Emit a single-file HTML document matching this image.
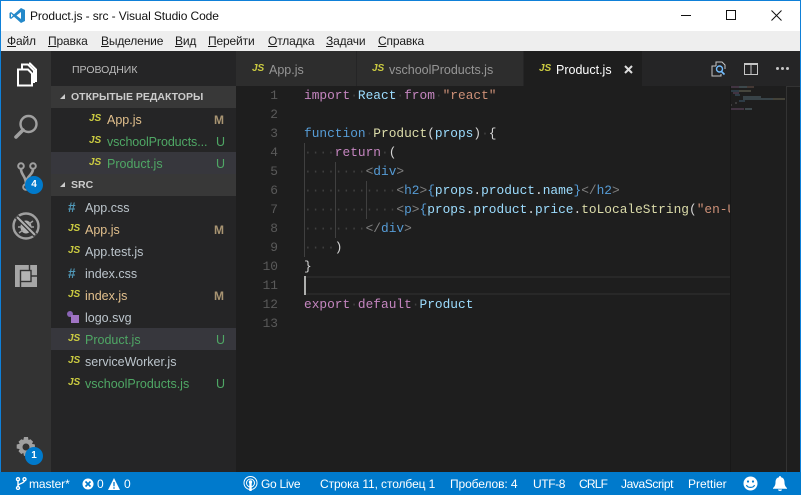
<!DOCTYPE html>
<html><head><meta charset="utf-8">
<style>
html,body{margin:0;padding:0;background:#1e1e1e;}
#r{position:relative;width:801px;height:495px;overflow:hidden;background:#1e1e1e;font-family:"Liberation Sans",sans-serif;}
.a{position:absolute;}
.t{position:absolute;white-space:pre;line-height:16px;}
.m{font-size:12px;color:#1a1a1a;top:33px;letter-spacing:-.15px;}
.m u{text-decoration:underline;}
.f{font-size:12.5px;color:#cccccc;}
.g{color:#73c991;}.o{color:#e2c08d;}
.b{font-size:12px;font-weight:bold;}
.js{position:absolute;font-size:10px;font-weight:bold;font-style:italic;color:#cbcb41;font-family:"Liberation Sans",sans-serif;line-height:12px;}
.h{position:absolute;font-size:13.5px;font-weight:bold;color:#519aba;line-height:14px;}
.c{position:absolute;left:304px;font-family:"Liberation Mono",monospace;font-size:12.83px;line-height:19px;white-space:pre;color:#d4d4d4;}
.n{position:absolute;width:30px;left:248px;text-align:right;font-family:"Liberation Mono",monospace;font-size:12.83px;line-height:19px;color:#5a5a5a;}
.w{color:#404040;}
.k{color:#c586c0;}.v{color:#569cd6;}.i{color:#9cdcfe;}.s{color:#ce9178;}.y{color:#dcdcaa;}.l{color:#808080;}
.st{position:absolute;top:476px;font-size:12px;line-height:16px;color:#fff;white-space:pre;}
.ig{position:absolute;width:1px;background:#404040;}
.bd{position:absolute;width:18px;height:18px;border-radius:50%;background:#007acc;color:#fff;font-size:10px;font-weight:bold;text-align:center;line-height:18px;}
</style></head><body>
<div id="r">
<!-- title -->
<div class="a" style="left:0;top:0;width:801px;height:31px;background:#fff;"></div>
<div class="a" style="left:0;top:0;width:801px;height:1px;background:#0f80d8;"></div>
<svg class="a" style="left:9px;top:7px" width="17" height="17" viewBox="0 0 17 17"><path d="M12 1l4 2v11l-4 2-7-6.2L2 12 .5 11V6L2 5l3 2.2z" fill="#2489ca"/><path d="M12 5L7.500 8.500 12 12z" fill="#fff"/><path d="M2 6.500v4L4 8.500z" fill="#fff"/></svg>
<div class="t" style="left:30px;top:8px;font-size:12px;color:#111;letter-spacing:-.1px">Product.js - src - Visual Studio Code</div>
<div class="a" style="left:681px;top:15px;width:10px;height:1px;background:#111;"></div>
<div class="a" style="left:726px;top:10px;width:8px;height:8px;border:1px solid #111;"></div>
<svg class="a" style="left:771px;top:10px" width="11" height="11"><path d="M.5.5l10 10M10.500.5l-10 10" stroke="#111" stroke-width="1"/></svg>
<!-- menu -->
<div class="a" style="left:0;top:31px;width:801px;height:20px;background:#eeeeee;"></div>
<div class="t m" style="left:7px"><u>Ф</u>айл</div>
<div class="t m" style="left:48px"><u>П</u>равка</div>
<div class="t m" style="left:101px"><u>В</u>ыделение</div>
<div class="t m" style="left:175px"><u>В</u>ид</div>
<div class="t m" style="left:208px"><u>П</u>ерейти</div>
<div class="t m" style="left:268px"><u>О</u>тладка</div>
<div class="t m" style="left:326px"><u>З</u>адачи</div>
<div class="t m" style="left:378px"><u>С</u>правка</div>
<!-- activity -->
<div class="a" style="left:1px;top:51px;width:50px;height:421px;background:#333333;"></div>
<div class="a" style="left:0;top:0;width:1px;height:495px;background:#0f80d8;"></div>
<div class="a" style="left:800px;top:0;width:1px;height:495px;background:#0f80d8;"></div>
<svg class="a" style="left:14px;top:62px" width="26" height="26" viewBox="0 0 26 26" fill="none" stroke="#fff" stroke-width="2"><path d="M4 7.500V23.500H18V11.500l-4-4z"/><path d="M8 7V2.500h6l6 6V20h-2"/><path d="M15 1.500h1l6 6V20"/></svg>
<svg class="a" style="left:13px;top:114px" width="26" height="26" viewBox="0 0 26 26" fill="none" stroke="#a0a0a0"><circle cx="15.500" cy="10" r="8" stroke-width="2.400"/><path d="M10 16L3 23" stroke-width="3.600" stroke-linecap="round"/></svg>
<svg class="a" style="left:15px;top:162px" width="24" height="30" viewBox="0 0 24 30" fill="none" stroke="#a0a0a0" stroke-width="2"><circle cx="6" cy="4" r="2.800"/><circle cx="18" cy="4" r="2.800"/><circle cx="11" cy="25" r="2.800"/><path d="M6 7c0 6 5 7 5 15M18 7c0 6-7 7-7 15" stroke-width="2.600"/></svg>
<div class="bd" style="left:25px;top:176px">4</div>
<svg class="a" style="left:12px;top:212px" width="28" height="28" viewBox="0 0 28 28" fill="none" stroke="#a0a0a0"><circle cx="14" cy="14" r="12.500" stroke-width="2.400"/><ellipse cx="14" cy="15" rx="5.500" ry="6.500" fill="#b0b0b0" stroke="none"/><path d="M7 9l4 3M21 9l-4 3M6 15h4M22 15h-4M7 21l4-3M21 21l-4-3" stroke-width="1.500"/><path d="M4.500 4.500l19 19" stroke="#333" stroke-width="4.500"/><path d="M5 5l18 18" stroke="#b0b0b0" stroke-width="2"/></svg>
<svg class="a" style="left:15px;top:265px" width="22" height="22" viewBox="0 0 22 22"><rect width="22" height="22" fill="#a6a6a6"/><path d="M14.500 0v5.500M15.500 11H22M5.500 16.500V22" stroke="#333" stroke-width="1.400" fill="none"/><rect x="5.500" y="5.500" width="10.500" height="11" fill="#b4b4b4" stroke="#333" stroke-width="1.400"/></svg>
<svg class="a" style="left:16px;top:437px" width="20" height="20" viewBox="0 0 20 20"><path fill="#a0a0a0" fill-rule="evenodd" d="M8 0h4l.5 3 2-.8 2.600 2.600-1.200 2 3 .7v4l-3 .6 1.200 2.200-2.800 2.800-2-1.200-.8 3H8l-.7-3-2 1.200-2.800-2.800 1.200-2.200-3-.6V7.500l3-.7-1.200-2 2.800-2.600 2 .8zM10 6.500a3.500 3.500 0 1 0 0 7 3.500 3.500 0 0 0 0-7z"/></svg>
<div class="bd" style="left:25px;top:447px">1</div>
<!-- sidebar -->
<div class="a" style="left:51px;top:51px;width:185px;height:421px;background:#252526;"></div>
<div class="t" style="left:72px;top:62px;font-size:10.5px;color:#bbbbbb">ПРОВОДНИК</div>
<div class="a" style="left:51px;top:86px;width:185px;height:22px;background:#383838;"></div>
<div class="t b" style="left:71px;top:89px;font-size:10.5px;color:#cccccc;">ОТКРЫТЫЕ РЕДАКТОРЫ</div>
<svg class="a" style="left:59px;top:93px" width="7" height="7"><path d="M6 1v5H1z" fill="#ccc"/></svg>
<div class="a" style="left:51px;top:152px;width:185px;height:22px;background:#37373d;"></div>
<div class="js" style="left:89px;top:113px">JS</div><div class="t f o" style="left:107px;top:112px">App.js</div><div class="t b" style="left:214px;top:112px;color:#a89472">M</div>
<div class="js" style="left:89px;top:135px">JS</div><div class="t f" style="left:107px;top:134px;color:#4fa765;letter-spacing:-.1px">vschoolProducts...</div><div class="t f" style="left:216px;top:134px;color:#4fa765">U</div>
<div class="js" style="left:89px;top:157px">JS</div><div class="t f" style="left:107px;top:156px;color:#4fa765">Product.js</div><div class="t f" style="left:216px;top:156px;color:#4fa765">U</div>
<div class="a" style="left:51px;top:174px;width:185px;height:22px;background:#383838;"></div>
<div class="t b" style="left:71px;top:177px;font-size:10.5px;color:#cccccc;">SRC</div>
<svg class="a" style="left:59px;top:181px" width="7" height="7"><path d="M6 1v5H1z" fill="#ccc"/></svg>
<div class="h" style="left:68px;top:201px">#</div><div class="t f" style="left:85px;top:200px;color:#bcc5cc">App.css</div>
<div class="js" style="left:68px;top:223px">JS</div><div class="t f o" style="left:85px;top:222px">App.js</div><div class="t b" style="left:214px;top:222px;color:#a89472">M</div>
<div class="js" style="left:68px;top:245px">JS</div><div class="t f" style="left:85px;top:244px;color:#bcc5cc">App.test.js</div>
<div class="h" style="left:68px;top:267px">#</div><div class="t f" style="left:85px;top:266px;color:#bcc5cc">index.css</div>
<div class="js" style="left:68px;top:289px">JS</div><div class="t f o" style="left:85px;top:288px">index.js</div><div class="t b" style="left:214px;top:288px;color:#a89472">M</div>
<div class="a" style="left:67px;top:311px;width:6px;height:6px;border-radius:50%;background:#8a64b5;"></div>
<div class="a" style="left:71px;top:315px;width:8px;height:8px;background:#a074c4;"></div>
<div class="t f" style="left:85px;top:310px;color:#bcc5cc">logo.svg</div>
<div class="a" style="left:51px;top:328px;width:185px;height:22px;background:#37373d;"></div>
<div class="js" style="left:68px;top:333px">JS</div><div class="t f" style="left:85px;top:332px;color:#4fa765">Product.js</div><div class="t f" style="left:216px;top:332px;color:#4fa765">U</div>
<div class="js" style="left:68px;top:355px">JS</div><div class="t f" style="left:85px;top:354px;color:#bcc5cc">serviceWorker.js</div>
<div class="js" style="left:68px;top:377px">JS</div><div class="t f" style="left:85px;top:376px;color:#4fa765">vschoolProducts.js</div><div class="t f" style="left:216px;top:376px;color:#4fa765">U</div>
<!-- tabs -->
<div class="a" style="left:236px;top:51px;width:564px;height:35px;background:#252526;"></div>
<div class="a" style="left:236px;top:51px;width:120px;height:35px;background:#2d2d2d;"></div>
<div class="a" style="left:357px;top:51px;width:166px;height:35px;background:#2d2d2d;"></div>
<div class="a" style="left:524px;top:51px;width:118px;height:35px;background:#1e1e1e;"></div>
<div class="js" style="left:252px;top:63px">JS</div><div class="t f" style="left:269px;top:62px;color:#969696">App.js</div>
<div class="js" style="left:372px;top:63px">JS</div><div class="t f" style="left:389px;top:62px;color:#969696">vschoolProducts.js</div>
<div class="js" style="left:539px;top:63px">JS</div><div class="t f" style="left:556px;top:62px;color:#fff">Product.js</div>
<svg class="a" style="left:624px;top:65px" width="9" height="9"><path d="M1 1l7 7M8 1L1 8" stroke="#ddd" stroke-width="2"/></svg>
<svg class="a" style="left:711px;top:61px" width="16" height="16" viewBox="0 0 16 16" fill="none"><path d="M5 5H1v10h9v-2M5 5V1h6l3 3v4" stroke="#c5c5c5"/><circle cx="8.500" cy="8" r="3" stroke="#75beff" stroke-width="1.400"/><path d="M10.500 10.500l3 3" stroke="#75beff" stroke-width="1.600"/></svg>
<svg class="a" style="left:744px;top:63px" width="14" height="12"><rect x=".5" y=".5" width="13" height="11" fill="none" stroke="#c5c5c5"/><rect y="0" width="14" height="2" fill="#c5c5c5"/><path d="M7 1v11" stroke="#c5c5c5"/></svg>
<div class="a" style="left:776px;top:67px;width:3px;height:3px;background:#c5c5c5;border-radius:50%;box-shadow:5px 0 #c5c5c5,10px 0 #c5c5c5;"></div>
<!-- editor -->
<div class="n" style="top:86px">1</div><div class="n" style="top:105px">2</div><div class="n" style="top:124px">3</div><div class="n" style="top:143px">4</div><div class="n" style="top:162px">5</div><div class="n" style="top:181px">6</div><div class="n" style="top:200px">7</div><div class="n" style="top:219px">8</div><div class="n" style="top:238px">9</div><div class="n" style="top:257px">10</div><div class="n" style="top:276px">11</div><div class="n" style="top:295px">12</div><div class="n" style="top:314px">13</div>
<div class="ig" style="left:304px;top:143px;height:114px;"></div>
<div class="ig" style="left:335px;top:162px;height:76px;"></div>
<div class="ig" style="left:366px;top:181px;height:38px;"></div>
<div class="a" style="left:304px;top:276px;width:426px;height:19px;box-sizing:border-box;border-top:2px solid #282828;border-bottom:2px solid #282828;"></div>
<div class="a" style="left:304px;top:276px;width:2px;height:19px;background:#aeafad;"></div>
<div class="c" style="top:86px"><span class="k">import</span><span class="w">·</span><span class="i">React</span><span class="w">·</span><span class="k">from</span><span class="w">·</span><span class="s">"react"</span></div>
<div class="c" style="top:124px"><span class="v">function</span><span class="w">·</span><span class="y">Product</span>(<span class="i">props</span>)<span class="w">·</span>{</div>
<div class="c" style="top:143px"><span class="w">····</span><span class="k">return</span><span class="w">·</span>(</div>
<div class="c" style="top:162px"><span class="w">········</span><span class="l">&lt;</span><span class="v">div</span><span class="l">&gt;</span></div>
<div class="c" style="top:181px"><span class="w">············</span><span class="l">&lt;</span><span class="v">h2</span><span class="l">&gt;</span><span class="v">{</span><span class="i">props</span>.<span class="i">product</span>.<span class="i">name</span><span class="v">}</span><span class="l">&lt;/</span><span class="v">h2</span><span class="l">&gt;</span></div>
<div class="c" style="top:200px;width:426px;overflow:hidden"><span class="w">············</span><span class="l">&lt;</span><span class="v">p</span><span class="l">&gt;</span><span class="v">{</span><span class="i">props</span>.<span class="i">product</span>.<span class="i">price</span>.<span class="y">toLocaleString</span>(<span class="s">"en-US"</span>)</div>
<div class="c" style="top:219px"><span class="w">········</span><span class="l">&lt;/</span><span class="v">div</span><span class="l">&gt;</span></div>
<div class="c" style="top:238px"><span class="w">····</span>)</div>
<div class="c" style="top:257px">}</div>
<div class="c" style="top:295px"><span class="k">export</span><span class="w">·</span><span class="k">default</span><span class="w">·</span><span class="i">Product</span></div>
<!-- minimap -->
<div class="a" style="left:730px;top:86px;width:1px;height:386px;background:#181818;"></div>
<div class="a" style="left:786px;top:86px;width:1px;height:386px;background:#333;"></div>
<div class="a" style="left:787px;top:86px;width:13px;height:1px;background:#333;"></div>
<svg class="a" style="left:731px;top:86px" width="55" height="30"><g stroke-width="1" opacity=".55"><path d="M0 1h8" stroke="#a070a0"/><path d="M8 1h8" stroke="#8fb5c8"/><path d="M16 1h7" stroke="#a88070"/><path d="M0 5h8" stroke="#5a8ab0"/><path d="M8 5h12" stroke="#b0b090"/><path d="M2 7h6" stroke="#a070a0"/><path d="M4 9h5" stroke="#5a8ab0"/><path d="M12 11h18" stroke="#7fa5b8"/><path d="M12 13h30" stroke="#7fa5b8"/><path d="M42 13h12" stroke="#a8a080"/><path d="M8 15h6" stroke="#5a8ab0"/><path d="M4 17h2" stroke="#888"/><path d="M0 19h1" stroke="#888"/><path d="M0 23h13" stroke="#a070a0"/><path d="M14 23h7" stroke="#8fb5c8"/></g></svg>
<!-- status -->
<div class="a" style="left:0;top:472px;width:801px;height:23px;background:#007acc;"></div>
<svg class="a" style="left:15px;top:477px" width="12" height="13" viewBox="0 0 12 13" fill="none" stroke="#fff" stroke-width="1.400"><circle cx="3" cy="2.200" r="1.500"/><circle cx="9.500" cy="2.200" r="1.500"/><circle cx="3" cy="11" r="1.500"/><path d="M3 3.500v6M9.500 3.500c0 3-6 3-6.500 5"/></svg>
<div class="st" style="left:29px;letter-spacing:-.1px">master*</div>
<svg class="a" style="left:82px;top:478px" width="12" height="12" viewBox="0 0 12 12"><circle cx="6" cy="6" r="5.500" fill="#fff"/><path d="M3.500 3.500l5 5M8.500 3.500l-5 5" stroke="#007acc" stroke-width="1.600"/></svg>
<div class="st" style="left:97px">0</div>
<svg class="a" style="left:108px;top:478px" width="12" height="12" viewBox="0 0 12 12"><path d="M6 0l6 12H0z" fill="#fff"/><path d="M6 4v4.200M6 9.300v1.400" stroke="#007acc" stroke-width="1.300"/></svg>
<div class="st" style="left:124px">0</div>
<svg class="a" style="left:243px;top:476px" width="15" height="15" viewBox="0 0 15 15" fill="none" stroke="#fff"><circle cx="7.500" cy="7" r="6.500"/><circle cx="7.500" cy="7" r="4"/><circle cx="7.500" cy="6" r="1.700" fill="#fff" stroke="none"/><path d="M7.500 7v8" stroke-width="2.400"/></svg>
<div class="st" style="left:261px;letter-spacing:-.3px">Go Live</div>
<div class="st" style="left:320px;letter-spacing:-.1px">Строка 11, столбец 1</div>
<div class="st" style="left:450px;letter-spacing:-.1px">Пробелов: 4</div>
<div class="st" style="left:533px;letter-spacing:-.4px">UTF-8</div>
<div class="st" style="left:579px;letter-spacing:-.8px">CRLF</div>
<div class="st" style="left:621px;letter-spacing:-.4px">JavaScript</div>
<div class="st" style="left:688px">Prettier</div>
<svg class="a" style="left:743px;top:476px" width="15" height="15" viewBox="0 0 15 15"><circle cx="7.500" cy="7.500" r="7" fill="#fff"/><circle cx="5" cy="5.500" r="1.100" fill="#007acc"/><circle cx="10" cy="5.500" r="1.100" fill="#007acc"/><path d="M3.500 9c1 3.200 7 3.200 8 0" fill="none" stroke="#007acc" stroke-width="1.200"/></svg>
<svg class="a" style="left:773px;top:476px" width="14" height="15" viewBox="0 0 14 15"><path d="M7 0c1 0 1 1 1 1.300 2.500.5 3.500 2.500 3.500 5 0 3 1 4.500 2.500 5.700v.7H0V12c1.500-1.200 2.500-2.700 2.500-5.700 0-2.500 1-4.500 3.500-5C6 1 6 0 7 0zM5 13.500h4c0 2-4 2-4 0z" fill="#fff"/></svg>
</div>
</body></html>
